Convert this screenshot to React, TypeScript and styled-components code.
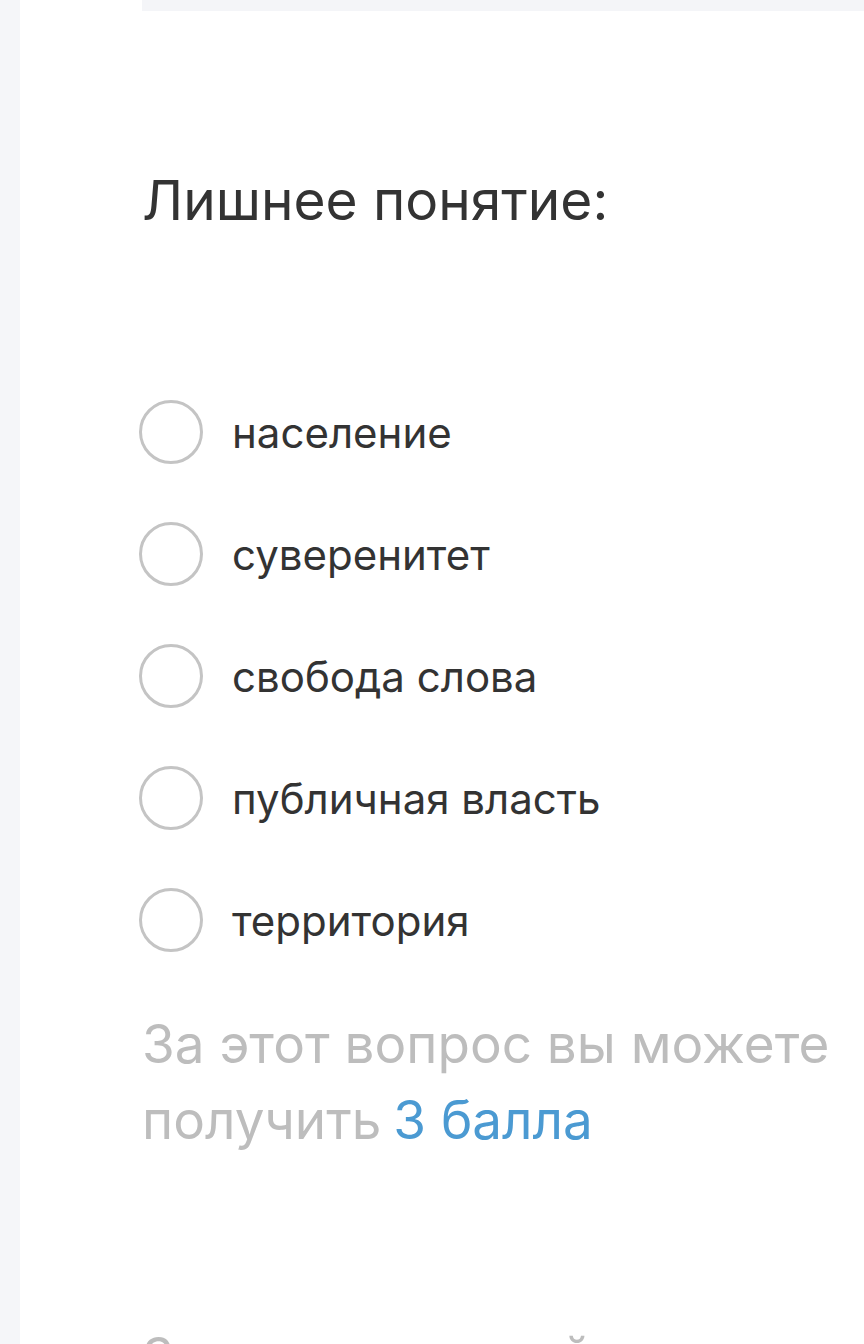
import styled, { createGlobalStyle } from 'styled-components';

const OPTIONS = [
  'население',
  'суверенитет',
  'свобода слова',
  'публичная власть',
  'территория',
];

const GlobalStyle = createGlobalStyle`
  html, body {
    margin: 0;
    padding: 0;
    background: #ffffff;
  }
  body {
    font-family: 'Inter', 'Open Sans', sans-serif;
  }
`;

export default function App() {
  return (
    <>
      <GlobalStyle />
      <Page>
        <Rail />
        <Main>
          <TopBar />
          <Question>
            <Title>Лишнее понятие:</Title>
            <OptionList>
              {OPTIONS.map((option) => (
                <Option key={option}>
                  <Radio />
                  <OptionText>{option}</OptionText>
                </Option>
              ))}
            </OptionList>
            <Score>
              За этот вопрос вы можете получить<Points>3 балла</Points>
            </Score>
            <Next>За некорректный ответ</Next>
          </Question>
        </Main>
      </Page>
    </>
  );
}

const Page = styled.div`
  display: flex;
  width: 864px;
  height: 1344px;
  overflow: hidden;
  background: #ffffff;
`;

const Rail = styled.div`
  width: 20px;
  flex-shrink: 0;
  background: #f5f6f9;
`;

const Main = styled.div`
  flex: 1;
  display: flex;
  flex-direction: column;
`;

const TopBar = styled.div`
  flex-shrink: 0;
  height: 11px;
  margin-left: 122px;
  background: #f4f5f8;
`;

const Question = styled.div`
  display: flex;
  flex-direction: column;
  padding: 144px 20px 0 122px;
`;

const Title = styled.h2`
  margin: 0;
  font-size: 55px;
  font-weight: 400;
  line-height: 90px;
  color: #333333;
`;

const OptionList = styled.ul`
  list-style: none;
  margin: 155px 0 0 -3px;
  padding: 0;
  display: flex;
  flex-direction: column;
  gap: 58px;
`;

const Option = styled.li`
  display: flex;
  align-items: center;
  gap: 29px;
  height: 64px;
`;

const Radio = styled.span`
  width: 64px;
  height: 64px;
  box-sizing: border-box;
  border: 3px solid #c4c4c4;
  border-radius: 50%;
  flex-shrink: 0;
`;

const OptionText = styled.span`
  font-size: 42px;
  color: #333333;
`;

const Score = styled.p`
  margin: 54px 0 0;
  font-size: 53px;
  line-height: 76px;
  color: #bdbdbd;
`;

const Points = styled.span`
  margin-left: 12px;
  color: #4b9ad2;
`;

const Next = styled.p`
  margin: 161px 0 0;
  font-size: 53px;
  line-height: 76px;
  color: #bdbdbd;
`;
